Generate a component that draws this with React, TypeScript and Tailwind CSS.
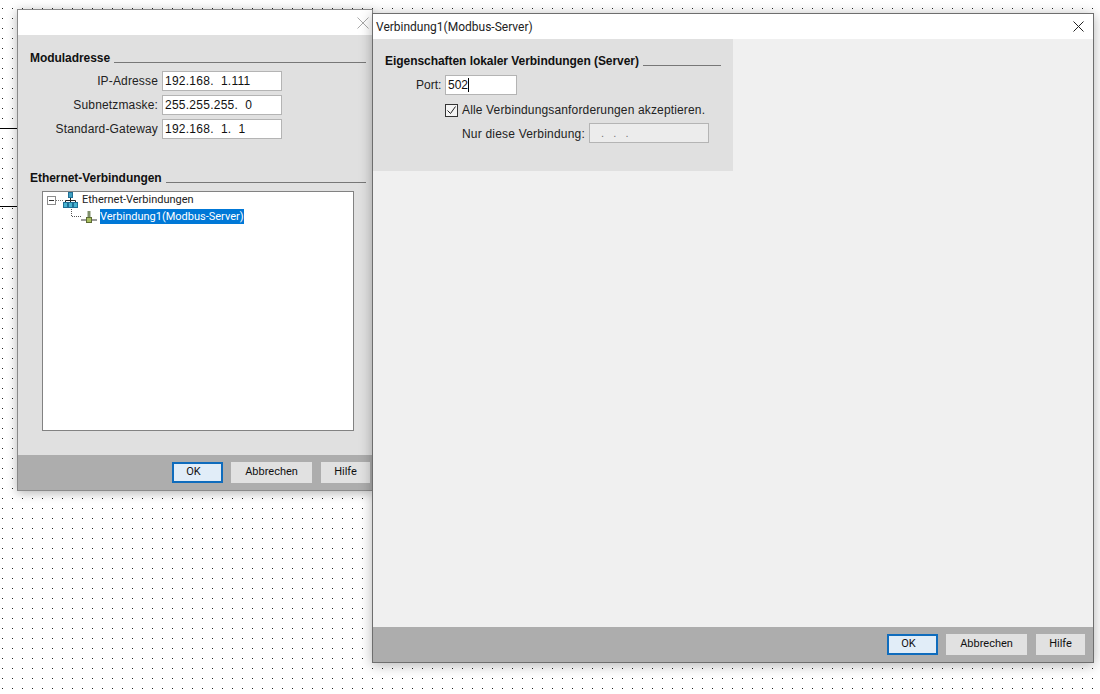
import type { ReactNode } from 'react';

const uiFont = "font-['Liberation_Sans',Arial,sans-serif]";
const winFont = "font-['Roboto','Noto_Sans',sans-serif]";

function Heading({ title }: { title: string }) {
  return (
    <div className="flex items-end gap-[4px] h-[14px]">
      <span className="text-[12px] leading-[14px] font-bold text-[#111] whitespace-nowrap tracking-[-0.05px]">{title}</span>
      <div className="flex-1 h-px bg-[#777] mb-[2px]" />
    </div>
  );
}

function Field({ label, value }: { label: string; value: string }) {
  return (
    <div className="flex items-center h-[20px]">
      <span className="w-[132px] pr-[4px] text-right text-[12px] text-[#222] whitespace-nowrap tracking-[0.15px]">{label}</span>
      <div className="w-[120px] h-[20px] bg-white border border-[#b4b4b4] pl-[2px] text-[12px] leading-[18px] text-[#111] whitespace-pre tracking-[0.25px]">{value}</div>
    </div>
  );
}

function DlgButton({ label, width, primary }: { label: string; width: string; primary?: boolean }) {
  return (
    <button className={`${width} h-[21px] text-[11px] text-[#111] ${winFont} ${primary ? 'bg-[#e1edf8] border-2 border-[#0f6cbd] pr-[8px]' : 'bg-[#e1e1e1]'}`}>
      {label}
    </button>
  );
}

function Footer({ children, className }: { children: ReactNode; className: string }) {
  return <div className={`h-[35px] bg-[#adadad] flex items-center shrink-0 ${className}`}>{children}</div>;
}

function NetworkIcon() {
  return (
    <svg width="15" height="16" viewBox="0 0 15 16" className="shrink-0">
      <rect x="5.500" y="0.500" width="4" height="5" fill="#3f9fc0" stroke="#1f6f96" />
      <path d="M7.500 6v3M2.500 10V8.500h10V10M7.500 9v1" fill="none" stroke="#222" />
      <rect x="0.500" y="10.500" width="4" height="5" fill="#49b3cf" stroke="#1f6f96" />
      <rect x="5.500" y="10.500" width="4" height="5" fill="#49b3cf" stroke="#1f6f96" />
      <rect x="10.500" y="10.500" width="4" height="5" fill="#49b3cf" stroke="#1f6f96" />
    </svg>
  );
}

function ConnectionIcon() {
  return (
    <svg width="29" height="15" viewBox="0 0 29 15" className="shrink-0">
      <path d="M0.500 0v7.500H10" fill="none" stroke="#555" strokeDasharray="1 1" />
      <path d="M10 11h16" stroke="#9a9a9a" strokeWidth="2" />
      <path d="M18 2v7" stroke="#7e8f6a" strokeWidth="3" />
      <rect x="15.500" y="8.500" width="5" height="5" fill="#a9bf5f" stroke="#5d6b34" />
    </svg>
  );
}

function ModuleWindow() {
  return (
    <div className="absolute left-[17px] top-[9px] w-[356px] h-[482px] flex flex-col border border-[#8a8a8a] shadow-[0_2px_10px_rgba(0,0,0,0.3)]">
      <div className="h-[25px] bg-white shrink-0 flex justify-end items-center pr-[3px]">
        <svg width="12" height="12" viewBox="0 0 12 12"><path d="M0.500 0.500l11 11M11.500 0.500l-11 11" stroke="#a8a8a8" fill="none" /></svg>
      </div>
      <div className="flex-1 bg-[#e0e0e0] pl-[12px] pr-[6px] pt-[16px] flex flex-col">
        <Heading title="Moduladresse" />
        <div className="flex flex-col gap-[4px] mt-[6px]">
          <Field label="IP-Adresse" value="192.168.  1.111" />
          <Field label="Subnetzmaske:" value="255.255.255.  0" />
          <Field label="Standard-Gateway" value="192.168.  1.  1" />
        </div>
        <div className="mt-[32px]"><Heading title="Ethernet-Verbindungen" /></div>
        <div className={`ml-[12px] mt-[6px] w-[312px] h-[240px] bg-white border border-[#828282] pl-[4px] text-[11px] ${winFont}`}>
          <div className="flex items-center h-[16px]">
            <div className="w-[9px] h-[9px] border border-[#8c8c8c] flex items-center justify-center shrink-0">
              <div className="w-[5px] h-px bg-[#333]" />
            </div>
            <div className="w-[7px] border-t border-dotted border-[#777] shrink-0" />
            <NetworkIcon />
            <span className="ml-[4px] text-[#222] whitespace-nowrap">Ethernet-Verbindungen</span>
          </div>
          <div className="flex items-center h-[15px] mt-px ml-[24px]">
            <ConnectionIcon />
            <span className="bg-[#0078d7] text-white h-[15px] leading-[15px] w-[144px] whitespace-nowrap">Verbindung1(Modbus-Server)</span>
          </div>
        </div>
      </div>
      <Footer className="pl-[154px]">
        <DlgButton label="OK" width="w-[51px]" primary />
        <div className="w-[8px]" />
        <DlgButton label="Abbrechen" width="w-[81px]" />
        <div className="w-[9px]" />
        <DlgButton label="Hilfe" width="w-[49px]" />
      </Footer>
    </div>
  );
}

function ServerWindow() {
  return (
    <div className="absolute left-[372px] top-[13px] w-[722px] h-[650px] flex flex-col border border-[#6e6e6e] shadow-[0_2px_12px_rgba(0,0,0,0.3)]">
      <div className={`h-[25px] bg-white shrink-0 flex items-center justify-between pl-[3px] pr-[9px] text-[12px] text-[#222] ${winFont}`}>
        <span>Verbindung1(Modbus-Server)</span>
        <svg width="11" height="11" viewBox="0 0 11 11"><path d="M0.500 0.500l10 10M10.500 0.500l-10 10" stroke="#222" fill="none" /></svg>
      </div>
      <div className="flex-1 bg-[#f0f0f0]">
        <div className="w-[360px] h-[132px] bg-[#e0e0e0] pl-[12px] pr-[12px] pt-[15px]">
          <Heading title="Eigenschaften lokaler Verbindungen (Server)" />
          <div className="flex items-center h-[20px] mt-[7px] ml-[31px]">
            <span className="text-[12px] text-[#222] w-[29px]">Port:</span>
            <div className="w-[72px] h-[20px] bg-white border border-[#b4b4b4] pl-[2px] text-[12px] leading-[18px] text-[#111] flex items-center">
              502<div className="w-px h-[14px] bg-black" />
            </div>
          </div>
          <div className="flex items-center h-[14px] mt-[8px] ml-[60px]">
            <div className="w-[13px] h-[13px] border border-[#333] bg-[#f4f4f4] flex items-center justify-center shrink-0">
              <svg width="11" height="11" viewBox="0 0 11 11"><path d="M1.500 5.500l3 3 5-7" fill="none" stroke="#222" /></svg>
            </div>
            <span className="ml-[4px] text-[12px] text-[#222] whitespace-nowrap tracking-[0.15px]">Alle Verbindungsanforderungen akzeptieren.</span>
          </div>
          <div className="flex items-center h-[20px] mt-[6px] ml-[77px]">
            <span className="w-[127px] pt-[2px] text-[12px] text-[#222] whitespace-nowrap tracking-[0.2px]">Nur diese Verbindung:</span>
            <div className="w-[120px] h-[20px] bg-[#ececec] border border-[#b4b4b4] pl-[11px] text-[11px] leading-[18px] text-[#777] whitespace-pre">.   .   .</div>
          </div>
        </div>
      </div>
      <Footer className="pl-[514px]">
        <DlgButton label="OK" width="w-[51px]" primary />
        <div className="w-[8px]" />
        <DlgButton label="Abbrechen" width="w-[81px]" />
        <div className="w-[9px]" />
        <DlgButton label="Hilfe" width="w-[49px]" />
      </Footer>
    </div>
  );
}

export default function App() {
  return (
    <div className={`relative w-[1100px] h-[694px] overflow-hidden bg-white ${uiFont} bg-[radial-gradient(circle_at_2.5px_8.5px,#222_0.5px,transparent_0.8px)] bg-[size:10px_10px]`}>
      <div className="absolute left-0 top-[128px] w-[17px] h-px bg-black" />
      <div className="absolute left-0 top-[206px] w-[17px] h-px bg-black" />
      <ModuleWindow />
      <ServerWindow />
    </div>
  );
}
